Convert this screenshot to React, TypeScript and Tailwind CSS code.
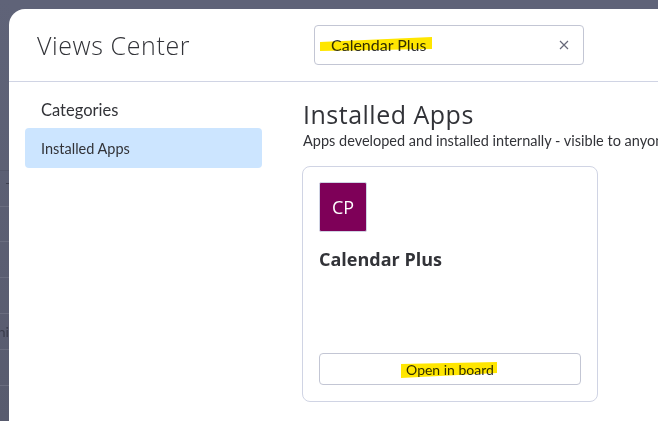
const rowHeights = ["h-[36px]", "h-[35px]", "h-[36px]", "h-[36px]", "h-[36px]", "h-[36px]"];

export default function App() {
  return (
    <div className="flex w-[658px] h-[421px] overflow-hidden bg-[#5f6378] font-['Lato',sans-serif] text-[#323338]">
      {/* dimmed board behind the modal */}
      <div className="w-[9px] shrink-0 flex flex-col bg-gradient-to-b from-[#5f6378] to-[#585b6e]">
        <div className="h-[171px] shrink-0 border-b border-[#55586b]" />
        {rowHeights.map((h, i) => (
          <div key={i} className={`${h} shrink-0 border-b border-[#6a6d7f] relative`}>
            {i === 0 && <div className="absolute right-0 top-[12px] w-[3px] h-px bg-[#3c3e4d]" />}
            {i === 4 && (
              <span className="absolute right-0 top-[9px] text-[14px] leading-[18px] text-[#3a3c4a]">ni</span>
            )}
          </div>
        ))}
      </div>

      <div className="flex-1 flex flex-col min-w-0">
        <div className="h-[9px] shrink-0" />
        <div className="relative flex-1 bg-white rounded-tl-[16px] flex flex-col min-h-0">
          <header className="h-[73px] shrink-0 border-b border-[#d0d4e4] flex items-center pl-[28px]">
            <h1 className="w-[277px] shrink-0 text-[25px] leading-[32px] font-light tracking-[0.6px] font-['Open_Sans',sans-serif] text-[#323338]">
              Views Center
            </h1>
            <div className="w-[270px] h-[40px] mt-[-1px] border border-[#c3c6d4] rounded-[4px] flex items-center pl-[16px] pr-[14px]">
              <span className="flex-1 text-[16px]">Calendar Plus</span>
              <svg width="10" height="10" viewBox="0 0 10 10" fill="none" stroke="#676879" strokeWidth="1.2">
                <path d="M1 1l8 8M9 1l-8 8" />
              </svg>
            </div>
          </header>

          <div className="flex flex-1 min-h-0">
            <aside className="w-[253px] shrink-0 pl-[16px] pt-[16px]">
              <p className="pl-[16px] text-[16.5px] leading-[24px]">Categories</p>
              <div className="w-[237px] h-[40px] mt-[6px] pt-[1px] rounded-[4px] bg-[#cce5ff] flex items-center pl-[16px] text-[14.5px]">
                Installed Apps
              </div>
            </aside>

            <main className="flex-1 min-w-0 pl-[41px] pt-[16px] overflow-hidden">
              <h2 className="text-[25px] leading-[32px] font-medium tracking-[0.5px] font-['Open_Sans',sans-serif] whitespace-nowrap">
                Installed Apps
              </h2>
              <p className="text-[14.5px] leading-[20px] mt-[1px] whitespace-nowrap">
                Apps developed and installed internally - visible to anyone in your account
              </p>
              <div className="w-[296px] h-[236px] mt-[15px] ml-[-1px] border border-[#d0d4e4] rounded-[8px] px-[16px] pt-[15px] pb-[16px] flex flex-col">
                <div className="w-[48px] h-[50px] rounded-[2px] border border-[#d0d4e4] bg-[#7e0058] flex items-center justify-center text-white text-[18px] font-['Open_Sans',sans-serif]">
                  CP
                </div>
                <h3 className="mt-[14px] text-[18px] leading-[26px] font-bold font-['Open_Sans',sans-serif]">
                  Calendar Plus
                </h3>
                <button className="mt-auto h-[32px] w-full border border-[#c3c6d4] rounded-[4px] text-[14px]">
                  Open in board
                </button>
              </div>
            </main>
          </div>

          {/* marker highlights drawn on top of the screenshot */}
          <svg className="absolute left-0 top-0 mix-blend-multiply pointer-events-none" width="649" height="412" fill="#ffe600">
            <polygon points="311,33 423,28 423,40 311,42" />
            <polygon points="392,355 488,353 488,364 392,369" />
          </svg>
        </div>
      </div>
    </div>
  );
}
